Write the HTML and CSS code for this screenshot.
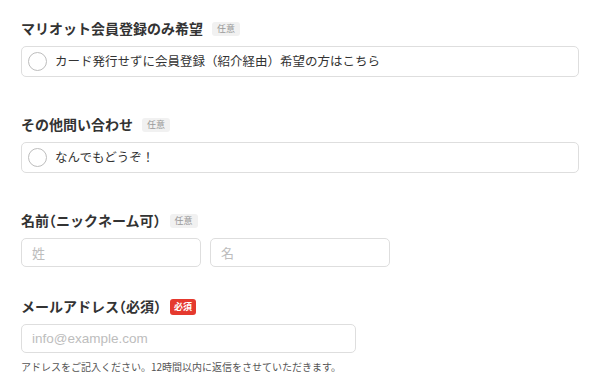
FILE: index.html
```html
<!DOCTYPE html>
<html lang="ja">
<head>
<meta charset="utf-8">
<link rel="stylesheet" href="styles.css">
</head>
<body>
<form class="form">
  <div class="field field--choice">
    <div class="label-row"><span class="label">マリオット会員登録のみ希望</span><span class="badge">任意</span></div>
    <label class="choice"><span class="radio"></span><span class="choice-text">カード発行せずに会員登録（紹介経由）希望の方はこちら</span></label>
  </div>
  <div class="field field--choice">
    <div class="label-row"><span class="label">その他問い合わせ</span><span class="badge">任意</span></div>
    <label class="choice"><span class="radio"></span><span class="choice-text">なんでもどうぞ！</span></label>
  </div>
  <div class="field field--name">
    <div class="label-row"><span class="label">名前<span class="paren">（</span>ニックネーム可<span class="paren">）</span></span><span class="badge">任意</span></div>
    <div class="name-row">
      <input class="input input--half" type="text" placeholder="姓">
      <input class="input input--half" type="text" placeholder="名">
    </div>
  </div>
  <div class="field">
    <div class="label-row"><span class="label">メールアドレス<span class="paren">（</span>必須<span class="paren">）</span></span><span class="badge badge--required">必須</span></div>
    <input class="input input--email" type="email" placeholder="info@example.com">
    <p class="help">アドレスをご記入ください。12時間以内に返信をさせていただきます。</p>
  </div>
</form>
</body>
</html>
```

FILE: styles.css
```css
* { box-sizing: border-box; }
html, body { margin: 0; padding: 0; background: #fff; }
body {
  font-family: "Noto Sans CJK JP", "Liberation Sans", sans-serif;
  color: #333;
}
.form {
  padding: 18px 21px 0 21px;
  display: flex;
  flex-direction: column;
}
.field { display: flex; flex-direction: column; }
.field--choice { margin-bottom: 37px; }
.field--name { margin-bottom: 29px; }
.label-row {
  display: flex;
  align-items: center;
  height: 20px;
  margin-bottom: 8px;
}
.label {
  font-size: 14px;
  font-weight: 700;
  color: #333;
  line-height: 20px;
}
.paren { font-feature-settings: "halt"; }
.badge {
  margin-left: 9px;
  font-size: 9px;
  line-height: 14px;
  height: 14px;
  padding: 0 5px;
  border-radius: 3px;
  background: #f1f1f1;
  color: #999;
  margin-top: 2px;
}
.badge--required {
  background: #e5392e;
  color: #fff;
  font-weight: 700;
  height: 16px;
  line-height: 16px;
  padding: 0 4px;
  margin-left: 9px;
  border-radius: 3px;
}
.choice {
  display: flex;
  align-items: center;
  width: 558px;
  height: 31px;
  border: 1px solid #dedede;
  border-radius: 5px;
  padding-left: 6px;
}
.radio {
  width: 19px;
  height: 19px;
  border: 1px solid #bdbdbd;
  border-radius: 50%;
  background: #fff;
  flex: none;
}
.choice-text {
  margin-left: 8px;
  font-size: 12.5px;
  color: #333;
  line-height: 1;
}
.name-row {
  display: flex;
  gap: 9px;
}
.input {
  height: 29px;
  border: 1px solid #dedede;
  border-radius: 5px;
  padding: 0 10px;
  font-family: "Noto Sans CJK JP", "Liberation Sans", sans-serif;
  font-size: 13px;
  color: #333;
  background: #fff;
  outline: none;
}
.input::placeholder { color: #bdbdbd; }
.input--half { width: 180px; }
.input--email {
  width: 335px;
  font-family: "Liberation Sans", "Noto Sans CJK JP", sans-serif;
  font-size: 13.5px;
}
.help {
  margin: 6px 0 0 0;
  font-size: 10px;
  color: #555;
  line-height: 16px;
}
```
